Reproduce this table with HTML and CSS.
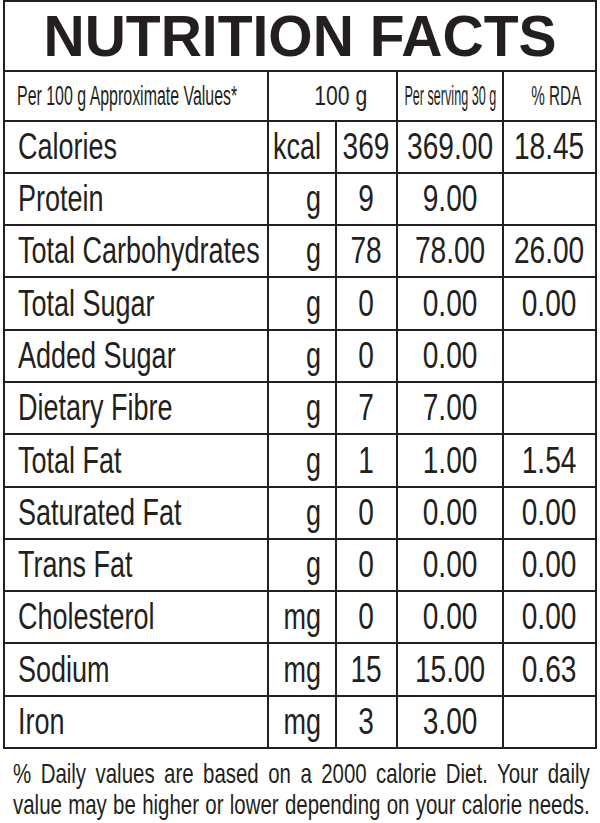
FILE: index.html
```html
<!DOCTYPE html>
<html lang="en">
<head>
<meta charset="utf-8">
<title>Nutrition Facts</title>
<link rel="stylesheet" href="styles.css">
</head>
<body>
<div class="facts">
  <div class="title"><h1>NUTRITION FACTS</h1></div>

  <div class="cell hd hd-name"><span class="t">Per 100 g Approximate Values*</span></div>
  <div class="cell hd hd-100 span2"><span class="t">100 g</span></div>
  <div class="cell hd hd-serv"><span class="t">Per serving 30 g</span></div>
  <div class="cell hd hd-rda"><span class="t">% RDA</span></div>

  <div class="cell name"><span class="t">Calories</span></div>
  <div class="cell unit"><span class="t">kcal</span></div>
  <div class="cell mid"><span class="t">369</span></div>
  <div class="cell mid"><span class="t">369.00</span></div>
  <div class="cell mid"><span class="t">18.45</span></div>

  <div class="cell name"><span class="t">Protein</span></div>
  <div class="cell unit"><span class="t">g</span></div>
  <div class="cell mid"><span class="t">9</span></div>
  <div class="cell mid"><span class="t">9.00</span></div>
  <div class="cell mid"></div>

  <div class="cell name"><span class="t">Total Carbohydrates</span></div>
  <div class="cell unit"><span class="t">g</span></div>
  <div class="cell mid"><span class="t">78</span></div>
  <div class="cell mid"><span class="t">78.00</span></div>
  <div class="cell mid"><span class="t">26.00</span></div>

  <div class="cell name"><span class="t">Total Sugar</span></div>
  <div class="cell unit"><span class="t">g</span></div>
  <div class="cell mid"><span class="t">0</span></div>
  <div class="cell mid"><span class="t">0.00</span></div>
  <div class="cell mid"><span class="t">0.00</span></div>

  <div class="cell name"><span class="t">Added Sugar</span></div>
  <div class="cell unit"><span class="t">g</span></div>
  <div class="cell mid"><span class="t">0</span></div>
  <div class="cell mid"><span class="t">0.00</span></div>
  <div class="cell mid"></div>

  <div class="cell name"><span class="t">Dietary Fibre</span></div>
  <div class="cell unit"><span class="t">g</span></div>
  <div class="cell mid"><span class="t">7</span></div>
  <div class="cell mid"><span class="t">7.00</span></div>
  <div class="cell mid"></div>

  <div class="cell name"><span class="t">Total Fat</span></div>
  <div class="cell unit"><span class="t">g</span></div>
  <div class="cell mid"><span class="t">1</span></div>
  <div class="cell mid"><span class="t">1.00</span></div>
  <div class="cell mid"><span class="t">1.54</span></div>

  <div class="cell name"><span class="t">Saturated Fat</span></div>
  <div class="cell unit"><span class="t">g</span></div>
  <div class="cell mid"><span class="t">0</span></div>
  <div class="cell mid"><span class="t">0.00</span></div>
  <div class="cell mid"><span class="t">0.00</span></div>

  <div class="cell name"><span class="t">Trans Fat</span></div>
  <div class="cell unit"><span class="t">g</span></div>
  <div class="cell mid"><span class="t">0</span></div>
  <div class="cell mid"><span class="t">0.00</span></div>
  <div class="cell mid"><span class="t">0.00</span></div>

  <div class="cell name"><span class="t">Cholesterol</span></div>
  <div class="cell unit"><span class="t">mg</span></div>
  <div class="cell mid"><span class="t">0</span></div>
  <div class="cell mid"><span class="t">0.00</span></div>
  <div class="cell mid"><span class="t">0.00</span></div>

  <div class="cell name"><span class="t">Sodium</span></div>
  <div class="cell unit"><span class="t">mg</span></div>
  <div class="cell mid"><span class="t">15</span></div>
  <div class="cell mid"><span class="t">15.00</span></div>
  <div class="cell mid"><span class="t">0.63</span></div>

  <div class="cell name"><span class="t">Iron</span></div>
  <div class="cell unit"><span class="t">mg</span></div>
  <div class="cell mid"><span class="t">3</span></div>
  <div class="cell mid"><span class="t">3.00</span></div>
  <div class="cell mid"></div>
</div>

<div class="note">
  <p class="note-text">% Daily values are based on a 2000 calorie Diet. Your daily<br>value may be higher or lower depending on your calorie needs.</p>
</div>
</body>
</html>
```

FILE: styles.css
```css
html, body {
  margin: 0;
  padding: 0;
  background: #ffffff;
  overflow: hidden;
}

body {
  font-family: "Liberation Sans", Arial, Helvetica, sans-serif;
  color: #231f20;
}

.facts {
  display: grid;
  width: 594px;
  box-sizing: border-box;
  margin-left: 3px;
  padding: 2px;
  gap: 2px;
  background: #231f20;
  grid-template-columns: 262px 66px 59px 104px 91px;
  grid-template-rows: 68px 48px 50px 50px 50px 51px 50px 50px 51px 50px 50px 50px 51px 50px;
}

.title {
  grid-column: 1 / -1;
  background: #ffffff;
  display: flex;
  align-items: center;
  justify-content: center;
}

.title h1 {
  margin: 0;
  font-size: 57px;
  font-weight: 700;
  line-height: 1;
  letter-spacing: 0;
  color: #231f20;
}

.cell {
  background: #ffffff;
  display: flex;
  align-items: center;
  justify-content: center;
  overflow: hidden;
  font-size: 36px;
}

.t {
  display: inline-block;
  flex: none;
  white-space: nowrap;
  transform: scaleX(0.75);
  transform-origin: center center;
}

.mid .t {
  transform: scaleX(0.78);
}

.span2 {
  grid-column: span 2;
}

.name {
  justify-content: flex-start;
  padding-left: 13px;
}

.name .t {
  transform-origin: left center;
}

.unit {
  justify-content: flex-end;
  padding-right: 14px;
}

.unit .t {
  transform-origin: right center;
}

.hd {
  font-size: 27px;
}

.hd-name {
  justify-content: flex-start;
  padding-left: 12px;
}

.hd-name .t {
  transform: scaleX(0.59);
  transform-origin: left center;
}

.hd-100 {
  padding-left: 16px;
}

.hd-100 .t {
  transform: scaleX(0.785);
}

.hd-serv .t {
  transform: scaleX(0.467);
}

.hd-rda {
  padding-left: 14px;
}

.hd-rda .t {
  transform: scaleX(0.565);
}

.note {
  margin: 9px 0 0 13px;
  width: 577px;
}

.note-text {
  margin: 0;
  width: 790px;
  font-size: 28px;
  line-height: 31px;
  text-align: justify;
  text-align-last: justify;
  transform: scaleX(0.73);
  transform-origin: left top;
}
```
